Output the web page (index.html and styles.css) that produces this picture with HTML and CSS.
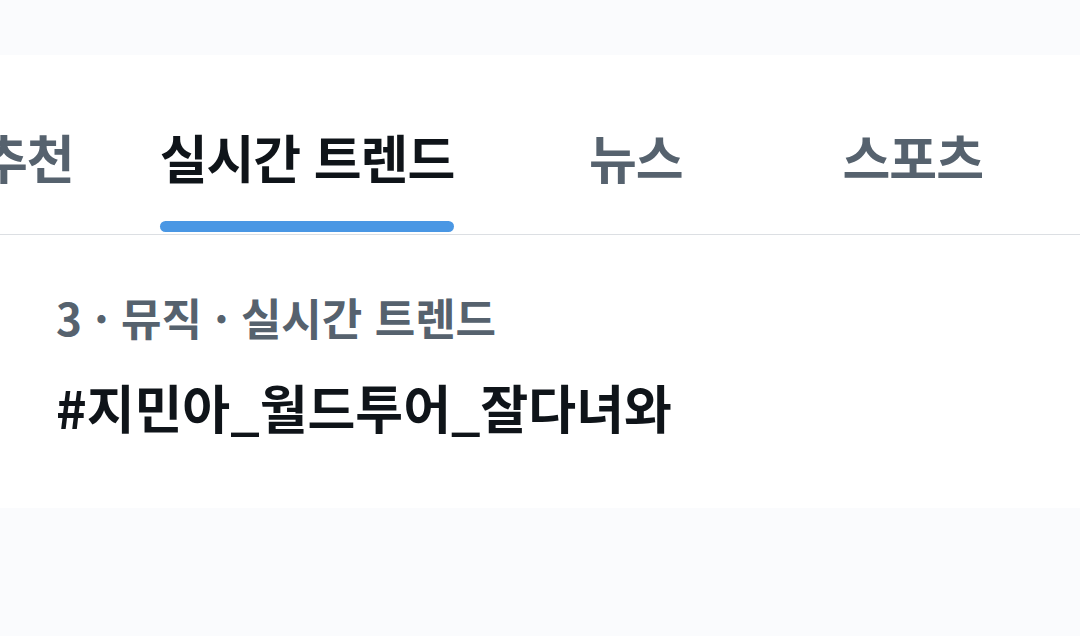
FILE: index.html
```html
<!DOCTYPE html>
<html lang="ko">
<head>
    <meta charset="UTF-8">
    <meta name="viewport" content="width=device-width, initial-scale=1.0">
    <title>실시간 트렌드</title>
    <link rel="stylesheet" href="styles.css">
</head>
<body>
    <div class="top-band"></div>

    <div class="panel">
        <nav class="tabs">
            <a class="tab tab-first">추천</a>
            <a class="tab active">실시간 트렌드</a>
            <a class="tab">뉴스</a>
            <a class="tab">스포츠</a>
        </nav>

        <div class="trend">
            <div class="trend-meta">3 · 뮤직 · 실시간 트렌드</div>
            <div class="trend-title">#지민아_월드투어_잘다녀와</div>
        </div>
    </div>
</body>
</html>
```

FILE: styles.css
```css
body {
    margin: 0;
    background: #fafbfd;
    font-family: "Noto Sans CJK KR", "Noto Sans", sans-serif;
    overflow: hidden;
}
.top-band {
    height: 55px;
}
.panel {
    background: #ffffff;
    height: 453px;
}
.tabs {
    display: flex;
    height: 179px;
    border-bottom: 1px solid #dcdfe3;
    margin-left: -63px;
}
.tab {
    position: relative;
    box-sizing: border-box;
    display: flex;
    align-items: center;
    justify-content: center;
    flex: none;
    min-width: 277px;
    padding: 24px 43px 0;
    font-size: 52px;
    font-weight: 700;
    letter-spacing: -1px;
    color: #56626e;
    white-space: nowrap;
}
.tab-first {
    min-width: 0;
}
.tab.active {
    color: #0f1419;
}
.tab.active::after {
    content: "";
    position: absolute;
    left: 43px;
    right: 43px;
    bottom: 2px;
    height: 11px;
    border-radius: 6px;
    background: #4a97e4;
}
.trend {
    padding: 54px 56px 0;
}
.trend-meta {
    font-size: 44px;
    font-weight: 700;
    color: #56626e;
    line-height: 56px;
}
.trend-title {
    margin-top: 32px;
    font-size: 52px;
    font-weight: 700;
    color: #0f1419;
    line-height: 60px;
}
```
